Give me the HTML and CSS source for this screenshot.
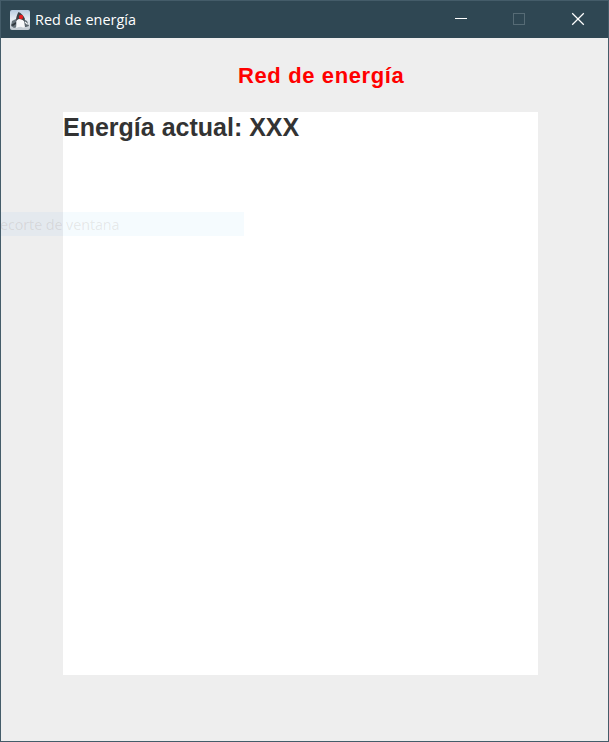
FILE: index.html
```html
<!DOCTYPE html>
<html lang="es">
<head>
<meta charset="utf-8">
<title>Red de energía</title>
<link rel="stylesheet" href="styles.css">
</head>
<body>
<div class="window">
  <header class="titlebar">
    <svg class="app-icon" width="20" height="20" viewBox="0 0 20 20">
      <defs>
        <linearGradient id="tile" x1="0" y1="0" x2="0" y2="1">
          <stop offset="0" stop-color="#b9cce0"/>
          <stop offset=".45" stop-color="#e6edf4"/>
          <stop offset="1" stop-color="#c0c8cf"/>
        </linearGradient>
      </defs>
      <rect width="20" height="20" rx="2" fill="url(#tile)"/>
      <path d="M1 16 2 11 6 9 7 17 4 18Z" fill="#69747c"/>
      <path d="M13 9 17 11 19 16 16 17 13 17Z" fill="#59646c"/>
      <path d="M8.500 2C7 5 6 7 6 11L9 9 14 11 15 9C14 6 11 3 8.500 2Z" fill="#3c4045"/>
      <path d="M7 10Q11 8 14 11L15 17Q13 18 12 17Q10 16 6 18Z" fill="#f7f8f9"/>
      <path d="M1 15 6 12 6 14 3 16Z" fill="#2f373d"/>
      <path d="M15 12 17 14 19 14" fill="none" stroke="#eef1f3" stroke-width="1.2"/>
      <circle cx="11" cy="7" r="2.200" fill="#e51f22"/>
    </svg>
    <span class="caption">Red de energía</span>
    <div class="controls">
      <svg width="58" height="37" viewBox="0 0 58 37"><path d="M23 17.5H35" stroke="#fff"/></svg>
      <svg width="58" height="37" viewBox="0 0 58 37"><rect x="23.5" y="12.5" width="11" height="11" fill="none" stroke="#566b75"/></svg>
      <svg width="60" height="37" viewBox="0 0 60 37"><path d="M24.2 12.2 35.8 23.8M35.8 12.2 24.2 23.8" stroke="#fff" stroke-width="1.25"/></svg>
    </div>
  </header>
  <main class="content">
    <h1 class="heading">Red de energía</h1>
    <section class="panel"><p class="status">Energía actual: XXX</p></section>
  </main>
  <div class="ghost">ecorte de ventana</div>
</div>
</body>
</html>
```

FILE: styles.css
```css
* {
  box-sizing: border-box;
}

body {
  margin: 0;
}

.window {
  position: relative;
  width: 609px;
  height: 742px;
  border: 1px solid #445c69;
  background: #eee;
  overflow: hidden;
}

.titlebar {
  display: flex;
  align-items: center;
  height: 37px;
  padding-left: 9px;
  background: #2f4753;
}

.caption {
  margin-left: 5px;
  color: #fff;
  font: 14.4px/20px "Open Sans", "Noto Sans", sans-serif;
  letter-spacing: 0.04px;
  white-space: nowrap;
}

.controls {
  display: flex;
  margin-left: auto;
}

.heading {
  margin: 0;
  padding: 24px 0 0 237px;
  height: 74px;
  color: #f00;
  font: bold 22px/27px "Liberation Sans", Arial, sans-serif;
  letter-spacing: 0.62px;
  white-space: nowrap;
}

.panel {
  width: 475px;
  height: 563px;
  margin-left: 62px;
  background: #fff;
}

.status {
  margin: 0;
  color: #333;
  font: bold 25px/31px "Liberation Sans", Arial, sans-serif;
  white-space: nowrap;
}

.ghost {
  position: absolute;
  top: 211px;
  left: -1px;
  width: 244px;
  height: 24px;
  background: linear-gradient(90deg, #e4e9ee 63px, #f5fbfe 63px);
  color: rgba(90, 60, 50, 0.11);
  font: 14.4px/26px "Open Sans", "Noto Sans", sans-serif;
  letter-spacing: -0.1px;
  white-space: nowrap;
}
```
